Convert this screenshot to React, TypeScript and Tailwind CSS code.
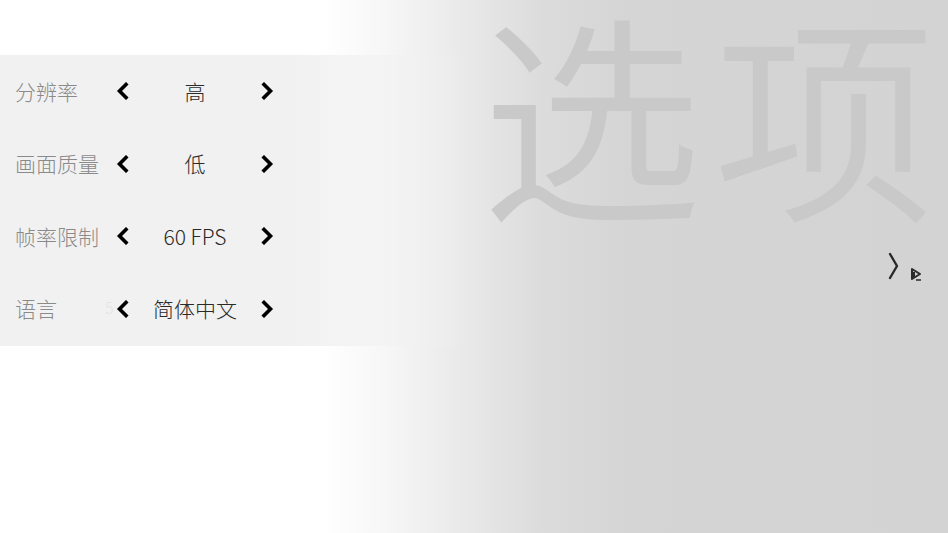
const ROWS = [
  { label: '分辨率', value: '高' },
  { label: '画面质量', value: '低' },
  { label: '帧率限制', value: '60 FPS' },
  { label: '语言', value: '简体中文', ghost: '5' },
];

const FONT = { fontFamily: '"Noto Sans CJK SC", "Noto Sans", sans-serif' };

export default function App() {
  return (
    <div
      className="relative h-[533px] w-full overflow-hidden bg-[linear-gradient(to_right,#ffffff_0%,#ffffff_34%,#f6f6f6_41%,#e9e9e9_49%,#dcdcdc_57%,#d5d5d5_66%,#d3d3d3_100%)]"
      style={FONT}
    >
      {/* big page title, sits behind the options */}
      <div className="pointer-events-none absolute right-[13px] top-[-1px] flex select-none gap-[12px] text-[221px] font-[350] leading-none text-[#c9c9c9]">
        <span>选</span>
        <span>项</span>
      </div>

      <div className="relative mt-[55px] flex h-[291px] w-[470px] flex-col bg-[linear-gradient(to_right,#f1f1f1_0%,#f1f1f1_62%,rgba(241,241,241,0.5)_85%,rgba(241,241,241,0)_100%)]">
        {ROWS.map((r) => (
          <OptionRow key={r.label} {...r} />
        ))}
      </div>

      {/* next / confirm hint */}
      <div className="absolute right-[26px] top-[252px] flex items-end gap-[10px]">
        <svg width="12" height="28" viewBox="0 0 12 28" fill="none">
          <path d="M2 2 L9 14 L2 26" stroke="#2a2a2a" strokeWidth="2.4" strokeLinecap="round" strokeLinejoin="round" />
        </svg>
        <svg width="12" height="14" viewBox="0 0 12 14" className="mb-[-1px]">
          <path d="M2 2 L10 7 L2 12 Z" fill="none" stroke="#2a2a2a" strokeWidth="2" strokeLinejoin="round" />
          <path d="M4 5 L4 10" stroke="#2a2a2a" strokeWidth="2" />
          <path d="M6 13 L11 13" stroke="#2a2a2a" strokeWidth="1.5" />
        </svg>
      </div>
    </div>
  );
}

function Chevron({ dir }: { dir: 'left' | 'right' }) {
  const d = dir === 'left' ? 'M11 2.5 L4.5 9 L11 15.5' : 'M3 2.5 L9.5 9 L3 15.5';
  return (
    <svg width="14" height="18" viewBox="0 0 14 18" fill="none" className="shrink-0">
      <path d={d} stroke="#000" strokeWidth="3.6" strokeLinecap="square" strokeLinejoin="miter" />
    </svg>
  );
}

function OptionRow({ label, value, ghost }: { label: string; value: string; ghost?: string }) {
  return (
    <div className="flex h-[72.5px] items-center pl-[15px]">
      <span className="relative w-[100px] text-[21px] font-light text-[#8a8a8a]">
        {label}
        {ghost && (
          <span className="absolute left-[90px] top-[2px] text-[16px] text-[#e3e3e3]">{ghost}</span>
        )}
      </span>
      <Chevron dir="left" />
      <span className="w-[132px] text-center text-[21px] font-light text-[#2a2a2a]">{value}</span>
      <Chevron dir="right" />
    </div>
  );
}
